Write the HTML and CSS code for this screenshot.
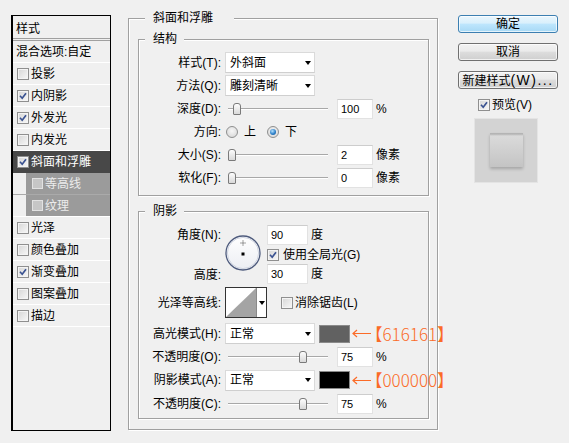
FILE: index.html
```html
<!DOCTYPE html>
<html lang="zh-CN">
<head>
<meta charset="utf-8">
<title>图层样式</title>
<link rel="stylesheet" href="styles.css">
</head>
<body>
<div class="dialog">
  <div class="styles-list">
    <div class="list-title">样式</div>
    <div class="list-row plain">混合选项:自定</div>
    <div class="list-row"><span class="cb"></span>投影</div>
    <div class="list-row"><span class="cb"><svg width="8" height="8" viewBox="0 0 8 8"><path d="M1 3.8L3.2 6.2L7 1.2" fill="none" stroke="#3a5291" stroke-width="1.7"/></svg></span>内阴影</div>
    <div class="list-row"><span class="cb"><svg width="8" height="8" viewBox="0 0 8 8"><path d="M1 3.8L3.2 6.2L7 1.2" fill="none" stroke="#3a5291" stroke-width="1.7"/></svg></span>外发光</div>
    <div class="list-row"><span class="cb"></span>内发光</div>
    <div class="list-row active"><span class="cb"><svg width="8" height="8" viewBox="0 0 8 8"><path d="M1 3.8L3.2 6.2L7 1.2" fill="none" stroke="#3a5291" stroke-width="1.7"/></svg></span>斜面和浮雕</div>
    <div class="list-row sub first"><div class="subbox"><span class="cb"></span>等高线</div></div>
    <div class="list-row sub"><div class="subbox"><span class="cb"></span>纹理</div></div>
    <div class="list-row"><span class="cb"></span>光泽</div>
    <div class="list-row"><span class="cb"></span>颜色叠加</div>
    <div class="list-row"><span class="cb"><svg width="8" height="8" viewBox="0 0 8 8"><path d="M1 3.8L3.2 6.2L7 1.2" fill="none" stroke="#3a5291" stroke-width="1.7"/></svg></span>渐变叠加</div>
    <div class="list-row"><span class="cb"></span>图案叠加</div>
    <div class="list-row"><span class="cb"></span>描边</div>
  </div>

  <div class="group outer">
    <div class="gtitle">斜面和浮雕</div>
    <div class="group inner struct">
      <div class="gtitle">结构</div>
      <div class="rows">
        <div class="frow"><span class="lbl">样式(T):</span><div class="select"><span>外斜面</span><i class="tri"></i></div></div>
        <div class="frow"><span class="lbl">方法(Q):</span><div class="select"><span>雕刻清晰</span><i class="tri"></i></div></div>
        <div class="frow"><span class="lbl">深度(D):</span><div class="slider"><span class="thumb" style="margin-left:5px"></span></div><div class="num">100</div><span class="unit">%</span></div>
        <div class="frow"><span class="lbl">方向:</span><span class="radio r1"></span><span class="rt">上</span><span class="radio r2 on"><span class="dot"></span></span><span class="rt">下</span></div>
        <div class="frow"><span class="lbl">大小(S):</span><div class="slider"><span class="thumb" style="margin-left:0px"></span></div><div class="num">2</div><span class="unit">像素</span></div>
        <div class="frow"><span class="lbl">软化(F):</span><div class="slider"><span class="thumb" style="margin-left:0px"></span></div><div class="num">0</div><span class="unit">像素</span></div>
      </div>
    </div>

    <div class="group inner shadow">
      <div class="gtitle">阴影</div>
      <div class="angle">
        <span class="lbl a1">角度(N):</span>
        <svg class="dial" width="36" height="36" viewBox="0 0 36 36">
          <defs>
            <linearGradient id="dialfill" x1="0" y1="0" x2="0" y2="1"><stop offset="0" stop-color="#ffffff"/><stop offset="1" stop-color="#eceef3"/></linearGradient>
          </defs>
          <circle cx="18" cy="18" r="17" fill="url(#dialfill)" stroke="#4d5a7c" stroke-width="1.3"/>
          <circle cx="18" cy="18" r="15.6" fill="none" stroke="#cfd4e0" stroke-width="1"/>
          <path d="M18 5.5v5M15.5 8h5" stroke="#444" stroke-width="1" stroke-dasharray="1 1"/>
          <rect x="16.5" y="17.5" width="3" height="3" fill="#000"/>
        </svg>
        <div class="c1"><div class="num w41">90</div><span class="unit">度</span></div>
        <div class="c2"><span class="cb"><svg width="8" height="8" viewBox="0 0 8 8"><path d="M1 3.8L3.2 6.2L7 1.2" fill="none" stroke="#3a5291" stroke-width="1.7"/></svg></span><span class="ct">使用全局光(G)</span></div>
        <span class="lbl a3">高度:</span>
        <div class="c3"><div class="num w41">30</div><span class="unit">度</span></div>
      </div>
      <div class="frow contour-row"><span class="lbl">光泽等高线:</span><div class="contour"><span class="curve"></span><span class="dd"><i class="tri"></i></span></div><span class="aa"><span class="cb"></span><span class="ct">消除锯齿(L)</span></span></div>
      <div class="frow mt4"><span class="lbl">高光模式(H):</span><div class="select"><span>正常</span><i class="tri"></i></div><span class="swatch hi"></span><svg class="arrow" width="19" height="9" viewBox="0 0 19 9"><path d="M1 4.5H19M5 1L1 4.5L5 8" fill="none" stroke="#fb6b27" stroke-width="1.2"/></svg><span class="note">【616161】</span></div>
      <div class="frow"><span class="lbl">不透明度(O):</span><div class="slider"><span class="thumb" style="margin-left:71px"></span></div><div class="num">75</div><span class="unit">%</span></div>
      <div class="frow h24"><span class="lbl">阴影模式(A):</span><div class="select"><span>正常</span><i class="tri"></i></div><span class="swatch sh"></span><svg class="arrow" width="19" height="9" viewBox="0 0 19 9"><path d="M1 4.5H19M5 1L1 4.5L5 8" fill="none" stroke="#fb6b27" stroke-width="1.2"/></svg><span class="note">【000000】</span></div>
      <div class="frow"><span class="lbl">不透明度(C):</span><div class="slider"><span class="thumb" style="margin-left:71px"></span></div><div class="num">75</div><span class="unit">%</span></div>
    </div>
  </div>

  <div class="side">
    <div class="btn primary">确定</div>
    <div class="btn">取消</div>
    <div class="btn">新建样式<span class="wide">(W)...</span></div>
    <div class="preview-check"><span class="cb"><svg width="8" height="8" viewBox="0 0 8 8"><path d="M1 3.8L3.2 6.2L7 1.2" fill="none" stroke="#3a5291" stroke-width="1.7"/></svg></span><span class="ct">预览(V)</span></div>
    <div class="preview"><div class="pv-sq"></div></div>
  </div>
</div>
</body>
</html>
```

FILE: styles.css
```css
* { box-sizing: border-box; }
html, body { margin: 0; }
body {
  width: 569px;
  height: 443px;
  overflow: hidden;
  background: #f0f0f0;
  font-family: "Liberation Sans", "Noto Sans CJK SC", sans-serif;
  font-size: 12px;
  line-height: 14px;
  color: #000;
}
.dialog {
  display: flex;
  align-items: flex-start;
  padding: 15px 0 0 11px;
}

/* left styles list */
.styles-list {
  flex: none;
  width: 100px;
  height: 416px;
  border: 1px solid #000;
  border-left-width: 2px;
}
.list-title {
  height: 25px;
  padding: 5px 0 0 3px;
  line-height: 16px;
  border-bottom: 3px double #a0a0a0;
}
.list-row {
  height: 22px;
  border-bottom: 1px solid #fff;
  display: flex;
  align-items: center;
  padding-left: 4px;
  white-space: nowrap;
}
.list-row.plain { padding-left: 3px; }
.list-row > .cb { margin-right: 2px; }
.list-row.active {
  background: #484848;
  color: #fff;
  border-bottom-color: #484848;
}
.list-row.sub {
  padding-left: 13px;
  align-items: stretch;
}
.list-row.sub.first { border-bottom-color: #aaaaaa; }
.subbox {
  flex: 1;
  display: flex;
  align-items: center;
  background: #9b9b9b;
  color: #ececec;
  padding-left: 6px;
}
.subbox .cb {
  width: 11px;
  height: 11px;
  border-color: #e2e2e2;
  background: #c6c6c6;
  box-shadow: none;
  margin-right: 2px;
}

/* checkbox */
.cb {
  flex: none;
  width: 12px;
  height: 12px;
  border: 1px solid #8f8f8f;
  background: linear-gradient(135deg, #d6d6d6, #f8f8f8);
  box-shadow: inset 0 0 0 1px #f4f4f4;
  display: flex;
  align-items: center;
  justify-content: center;
}
.cb svg { display: block; }
.ct { margin-left: 3px; white-space: nowrap; }

/* group boxes */
.group {
  border: 1px solid #a0a0a0;
  box-shadow: 1px 1px 0 #fff, inset 1px 1px 0 #fff;
}
.gtitle {
  width: fit-content;
  margin-top: -8px;
  background: #f0f0f0;
  line-height: 14px;
  white-space: nowrap;
}
.outer {
  flex: none;
  margin: 3px 0 0 17px;
  width: 310px;
  padding: 0 0 10px 9px;
}
.outer > .gtitle { margin-left: 7px; padding: 0 21px 0 8px; }
.inner { width: 291px; }
.inner > .gtitle { margin-left: 6px; padding: 0 7px 0 8px; }
.struct { margin-top: 14px; padding-bottom: 6px; }
.rows { padding-top: 5px; }
.shadow { margin-top: 15px; padding-bottom: 3px; }

/* form rows */
.frow {
  display: flex;
  align-items: center;
  height: 23px;
  white-space: nowrap;
}
.frow.h24 { height: 24px; }
.frow.mt4 { margin-top: 4px; }
.lbl {
  flex: none;
  width: 82px;
  text-align: right;
  white-space: nowrap;
}
.select {
  flex: none;
  margin-left: 4px;
  width: 90px;
  height: 21px;
  border: 1px solid #dadada;
  border-bottom-color: #cfcfcf;
  background: #fff;
  display: flex;
  align-items: center;
  padding: 0 3px 0 4px;
}
.tri {
  display: block;
  width: 0;
  height: 0;
  border-left: 3.5px solid transparent;
  border-right: 3.5px solid transparent;
  border-top: 4px solid #000;
}
.select .tri { margin-left: auto; }
.slider {
  flex: none;
  margin-left: 7px;
  width: 100px;
  height: 14px;
  display: flex;
  align-items: center;
  background:
    linear-gradient(#a8a8a8, #a8a8a8) 0 6px / 100% 1px no-repeat,
    linear-gradient(#ffffff, #ffffff) 0 7px / 100% 1px no-repeat;
}
.thumb {
  flex: none;
  width: 8px;
  height: 12px;
  border: 1px solid #7a7a7a;
  border-radius: 3px 3px 1px 1px;
  background: linear-gradient(#fdfdfd, #d9d9d9);
}
.num {
  flex: none;
  margin-left: 9px;
  width: 36px;
  height: 20px;
  border: 1px solid #e2e2e2;
  border-top-color: #cdcdcd;
  background: #fff;
  padding-left: 3px;
  font-size: 11px;
  display: flex;
  align-items: center;
}
.num.w41 { width: 41px; margin-left: 0; }
.unit { margin-left: 3px; }

/* radios */
.radio {
  flex: none;
  width: 12px;
  height: 12px;
  border-radius: 50%;
  border: 1px solid #8e8f8f;
  background: radial-gradient(circle at 50% 40%, #f6f6f6, #d3d3d3);
  display: flex;
  align-items: center;
  justify-content: center;
}
.radio.r1 { margin-left: 5px; }
.radio.r2 { margin-left: 11px; }
.radio .dot {
  width: 6px;
  height: 6px;
  border-radius: 50%;
  background: radial-gradient(circle at 40% 35%, #b5e3ff, #2c7fc9 55%, #0d4f8c);
}
.rt { margin-left: 6px; }

/* angle block */
.angle {
  display: grid;
  grid-template-columns: 82px 46px auto;
  grid-template-rows: 20px 19px 21px;
  margin-top: 7px;
}
.angle .a1 { grid-column: 1; grid-row: 1; align-self: center; }
.angle .a3 { grid-column: 1; grid-row: 3; align-self: center; }
.dial { grid-column: 2; grid-row: 1 / 4; margin: 10px 0 0 4px; display: block; }
.c1, .c2, .c3 { grid-column: 3; display: flex; align-items: center; }
.c1 { grid-row: 1; }
.c2 { grid-row: 2; }
.c3 { grid-row: 3; align-self: start; height: 20px; }
.c2 .ct { margin-left: 4px; }

/* contour */
.frow.contour-row { height: 31px; margin-top: 2px; }
.contour {
  flex: none;
  margin-left: 4px;
  width: 42px;
  height: 31px;
  border: 1px solid #333;
  background: #fff;
  display: flex;
}
.contour .curve {
  width: 30px;
  background: linear-gradient(to bottom right, #fff calc(50% - 0.5px), #a4a4a4 calc(50% + 0.5px));
}
.contour .dd {
  flex: 1;
  border-left: 1px solid #8a8a8a;
  display: flex;
  align-items: center;
  justify-content: center;
}
.aa { margin-left: 14px; display: flex; align-items: center; }
.aa .ct { margin-left: 2px; }

/* colour swatches and notes */
.swatch {
  flex: none;
  margin-left: 4px;
  width: 31px;
  height: 18px;
  border: 1px solid #8a8a8a;
}
.swatch.hi { background: #616161; }
.swatch.sh { background: #000; }
.arrow { flex: none; margin-left: 2px; display: block; }
.note {
  margin-left: 3px;
  font-family: "Noto Sans CJK SC", sans-serif;
  font-size: 17px;
  font-weight: 300;
  line-height: 20px;
  color: #fb6b27;
  font-feature-settings: "halt";
}

/* right side */
.side {
  flex: none;
  margin-left: 20px;
  width: 100px;
  display: flex;
  flex-direction: column;
}
.btn {
  height: 18px;
  border: 1px solid #707070;
  border-radius: 3px;
  background: linear-gradient(#f2f2f2, #ebebeb 45%, #dddddd 50%, #cfcfcf);
  box-shadow: inset 0 0 0 1px rgba(255, 255, 255, 0.7);
  text-align: center;
  line-height: 16px;
  white-space: nowrap;
}
.btn + .btn { margin-top: 10px; }
.btn.primary {
  border-color: #3c7fb1;
  background: linear-gradient(#eaf6fd, #d9f0fc 45%, #bee6fd 50%, #a7d9f5);
}
.btn .wide { font-size: 14px; letter-spacing: 1.5px; }
.preview-check {
  margin-top: 8px;
  height: 16px;
  display: flex;
  align-items: center;
  padding-left: 20px;
}
.preview-check .ct { margin-left: 2px; }
.preview {
  margin: 5px 0 0 16px;
  width: 64px;
  height: 65px;
  background: #d3d3d3;
  border: 1px solid #e4e4e4;
  padding: 14px 0 0 15px;
}
.pv-sq {
  width: 33px;
  height: 34px;
  background: linear-gradient(#b4b4b4 0, #b4b4b4 1px, #dadada 3px, #c4c4c4);
  box-shadow: 0 2px 3px rgba(0, 0, 0, 0.22);
}
```
